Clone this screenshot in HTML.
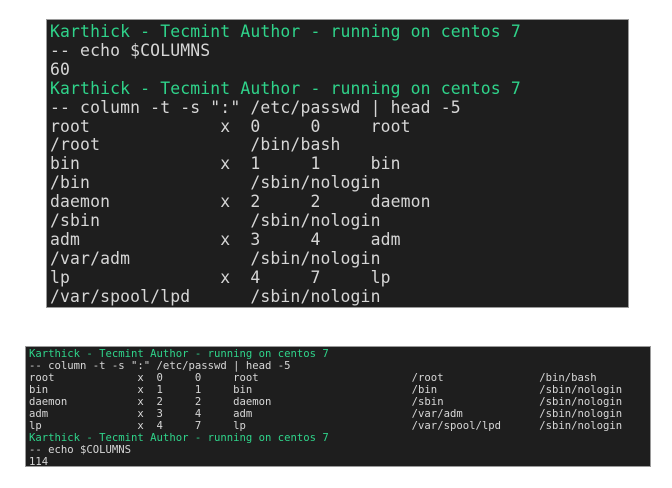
<!DOCTYPE html>
<html><head><meta charset="utf-8"><style>
html,body{margin:0;padding:0;background:#fff;width:672px;height:488px;overflow:hidden}
.box{position:absolute;background:#1e1e1e;border:1px solid #9a9a9a;overflow:hidden}
pre{margin:0;font-family:"DejaVu Sans Mono","Liberation Mono",monospace;color:#d6d6d6;white-space:pre}
.g{color:#2fd38a}
#t{left:46px;top:19px;width:581px;height:287px}
#t pre{position:absolute;left:3px;top:3px;font-size:16.4px;line-height:18.9px;letter-spacing:0.15px}
#b{left:25px;top:346px;width:624px;height:119px}
#b pre{position:absolute;left:3px;top:1px;font-size:10.6px;line-height:12px;letter-spacing:0px}
</style></head><body>
<div class="box" id="t"><pre><span class="g">Karthick - Tecmint Author - running on centos 7</span>
-- echo $COLUMNS
60
<span class="g">Karthick - Tecmint Author - running on centos 7</span>
-- column -t -s ":" /etc/passwd | head -5
root             x  0     0     root
/root               /bin/bash
bin              x  1     1     bin
/bin                /sbin/nologin
daemon           x  2     2     daemon
/sbin               /sbin/nologin
adm              x  3     4     adm
/var/adm            /sbin/nologin
lp               x  4     7     lp
/var/spool/lpd      /sbin/nologin
<span class="g">Karthick</span></pre></div>
<div class="box" id="b"><pre><span class="g">Karthick - Tecmint Author - running on centos 7</span>
-- column -t -s ":" /etc/passwd | head -5
root             x  0     0     root                        /root               /bin/bash
bin              x  1     1     bin                         /bin                /sbin/nologin
daemon           x  2     2     daemon                      /sbin               /sbin/nologin
adm              x  3     4     adm                         /var/adm            /sbin/nologin
lp               x  4     7     lp                          /var/spool/lpd      /sbin/nologin
<span class="g">Karthick - Tecmint Author - running on centos 7</span>
-- echo $COLUMNS
114</pre></div>
</body></html>
